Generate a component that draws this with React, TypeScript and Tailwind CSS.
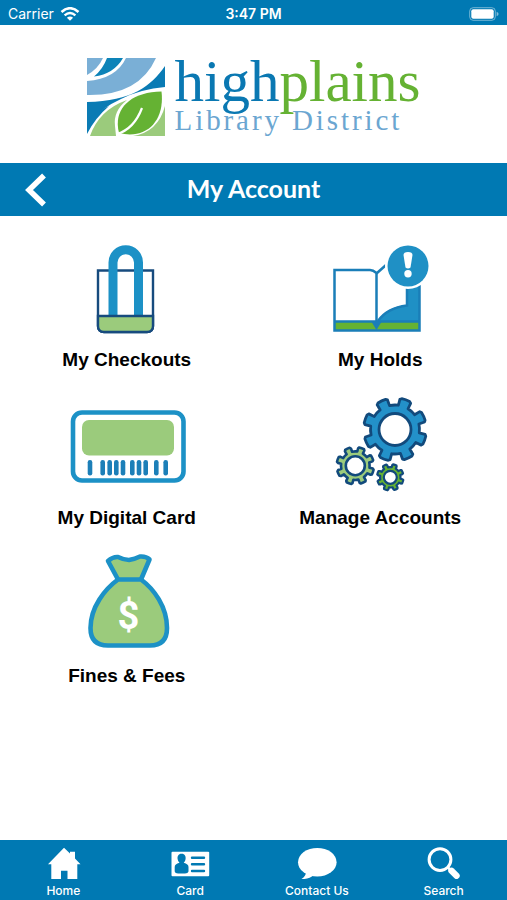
import type { ReactNode } from "react";

function gearPath(cx: number, cy: number, outer: number, inner: number, teeth: number, offset: number) {
  const step = 360 / teeth;
  const point = (r: number, deg: number) => {
    const a = (deg * Math.PI) / 180;
    return `${(cx + r * Math.cos(a)).toFixed(2)} ${(cy + r * Math.sin(a)).toFixed(2)}`;
  };
  const parts: string[] = [];
  for (let i = 0; i < teeth; i++) {
    const a = offset + i * step;
    parts.push(
      `${i === 0 ? "M" : "L"}${point(inner, a - step * 0.27)}`,
      `L${point(outer - 1, a - step * 0.24)}`,
      `L${point(outer, a - step * 0.17)}`,
      `A${outer} ${outer} 0 0 1 ${point(outer, a + step * 0.17)}`,
      `L${point(outer - 1, a + step * 0.24)}`,
      `L${point(inner, a + step * 0.27)}`,
      `A${inner} ${inner} 0 0 1 ${point(inner, a + step * 0.73)}`
    );
  }
  return parts.join(" ") + "Z";
}

function Gear(props: { cx: number; cy: number; outer: number; inner: number; hole: number; fill: string; stroke: number }) {
  const { cx, cy, outer, inner, hole, fill, stroke } = props;
  return (
    <g stroke="#124a7c" strokeWidth={stroke} strokeLinejoin="round">
      <path d={gearPath(cx, cy, outer, inner, 8, -70)} fill={fill} />
      <circle cx={cx} cy={cy} r={hole} fill="#fff" />
    </g>
  );
}

function Emblem() {
  return (
    <svg viewBox="0 0 78 78" className="size-[78px] shrink-0" aria-hidden="true">
      <path d="M0 0H16Q11 11 0 17Z" fill="#7aafd6" />
      <path d="M20 0H36Q27 16 7 18.500Q16 11 20 0Z" fill="#0d83b8" />
      <path d="M39 0H69Q52 38 0 37V23Q29 21 39 0Z" fill="#7aafd6" />
      <path d="M78 8V29Q54 31 34 41Q14 50 0 66V44C45 43 64 28 78 8Z" fill="#0a7bb4" />
      <path d="M3 78Q12 52 40 42Q26 53 28 68L29 78Z" fill="#9bcb7c" />
      <path d="M0 62V76Q8 60 22 48Q8 54 0 62Z" fill="#0a7bb4" />
      <path d="M74.500 33.500C78 62 60 82 32 75C26 52 42 34 74.500 33.500Z" fill="#65b233" />
      <path d="M30 76Q47 71 55 50" fill="none" stroke="#fff" strokeWidth="2.200" />
      <path d="M78 48V78H46Q71 74 78 48Z" fill="#9bcb7c" />
    </svg>
  );
}

function BagIcon() {
  return (
    <svg viewBox="0 0 120 100" className="h-[100px] w-[120px]" aria-hidden="true">
      <path d="M31 35.5H86V91Q86 97 80 97H37Q31 97 31 91Z" fill="#fff" stroke="#174b7e" strokeWidth="2.400" />
      <path d="M46 81V27.5a12.75 12.75 0 0 1 25.5 0V81" fill="none" stroke="#1c91c6" strokeWidth="9" />
      <path d="M31 81H86V91Q86 97 80 97H37Q31 97 31 91Z" fill="#9bcb7c" stroke="#174b7e" strokeWidth="2.400" />
    </svg>
  );
}

function BookIcon() {
  return (
    <svg viewBox="0 0 120 100" className="h-[100px] w-[120px]" aria-hidden="true">
      <path d="M14 87H99V95.500H14Z" fill="#65b233" />
      <path d="M86.500 50H100V86H58Q66 72 86.500 70Z" fill="#1f90c5" />
      <g fill="none" stroke="#1a7eb8" strokeWidth="2.500">
        <path d="M56.500 88V38Q53 35 50 35H14.500V95.500H99.500V50" />
        <path d="M14 86.500H99" />
        <path d="M56.500 38.500L66 30" />
        <path d="M58 86Q67 73 87 70.500V50" />
      </g>
      <path d="M51 86H62L56.500 95Z" fill="#1a7eb8" />
      <circle cx="88" cy="31" r="23" fill="#fff" />
      <circle cx="88" cy="31" r="20.500" fill="#1f90c5" />
      <path d="M83.500 20Q83.500 17 88 17T92.500 20L90.500 32.500Q88 34.500 85.500 32.500Z" fill="#fff" />
      <circle cx="88" cy="38.800" r="3.700" fill="#fff" />
    </svg>
  );
}

const bars = [23, 35.7, 42.7, 49.3, 56, 65.3, 72, 78.7, 89.3, 98.7];

function CardIcon() {
  return (
    <svg viewBox="0 0 120 100" className="h-[100px] w-[120px]" aria-hidden="true">
      <rect x="6" y="19.500" width="110.500" height="68" rx="9" fill="#fff" stroke="#1c91c6" strokeWidth="4.600" />
      <rect x="15" y="27" width="92" height="35.500" rx="7" fill="#9bcb7c" />
      {bars.map((x) => (
        <rect key={x} x={x - 2.3} y="67" width="4.600" height="15.500" rx="2.200" fill="#1c7fb8" />
      ))}
    </svg>
  );
}

function GearsIcon() {
  return (
    <svg viewBox="0 0 120 100" className="h-[100px] w-[120px]" aria-hidden="true">
      <Gear cx={75} cy={36.5} outer={31.5} inner={24.5} hole={16} fill="#2391c9" stroke={2.8} />
      <Gear cx={35.3} cy={72.7} outer={18.7} inner={14.3} hole={9.5} fill="#9bcb7c" stroke={2.6} />
      <Gear cx={70.3} cy={84.3} outer={13.3} inner={10.2} hole={6.5} fill="#65b233" stroke={2.2} />
    </svg>
  );
}

function MoneyIcon() {
  return (
    <svg viewBox="0 0 120 100" className="h-[100px] w-[120px]" aria-hidden="true">
      <g fill="#9bcb7c" stroke="#1c91c6" strokeWidth="4.600" strokeLinejoin="round">
        <path d="M51 28.500L41 10Q46 5.500 51 6Q57 9 62 9Q68 8 73 5.500Q79 5 82.500 8.500L74 28.500" />
        <path d="M51 28.500H74C87 38 100 56 100 77Q100 94.500 83 94.500H41Q23.500 94.500 23.500 77C23.500 56 38 38 51 28.500Z" />
      </g>
      <text x="61.500" y="78" textAnchor="middle" fontSize="38" className="fill-white font-['Roboto'] font-bold">
        $
      </text>
    </svg>
  );
}

function HomeIcon() {
  return (
    <svg viewBox="0 0 40 32" className="h-8 w-10" fill="#fff" aria-hidden="true">
      <path d="M21 .7L27 6.600V4.700H32V11.500L37.500 17.300H34.300V32H24.500V23.700H18V32H8.300V17.300H5Z" />
    </svg>
  );
}

function IdIcon() {
  return (
    <svg viewBox="0 0 40 32" className="h-8 w-10" aria-hidden="true">
      <rect x="1.500" y="4.700" width="37.700" height="24.500" rx="1" fill="#fff" />
      <path d="M11.600 6.800C15 6.800 16 9.500 15.600 12Q15.300 14.500 13.700 15.800Q18.500 17 18.500 20V24.500Q18 26.500 15 26.500H8Q5 26.500 4.700 24.500V20Q4.700 17 9.500 15.800Q7.900 14.500 7.600 12C7.200 9.500 8.200 6.800 11.600 6.800Z" fill="#0079b3" />
      <path d="M22 10.700H34M22 17.300H34M22 24H34" stroke="#0079b3" strokeWidth="2.400" strokeLinecap="round" />
    </svg>
  );
}

function ChatIcon() {
  return (
    <svg viewBox="0 0 40 32" className="h-8 w-10" fill="#fff" aria-hidden="true">
      <ellipse cx="20.300" cy="15.200" rx="19.300" ry="14.300" />
      <path d="M9 25Q9 29 4.500 32Q12 32.500 17 28Z" />
    </svg>
  );
}

function SearchIcon() {
  return (
    <svg viewBox="0 0 40 32" className="h-8 w-10" fill="none" stroke="#fff" aria-hidden="true">
      <circle cx="16" cy="12.600" r="10.900" strokeWidth="3" />
      <path d="M23.500 20L26 22.500" strokeWidth="2.500" />
      <path d="M27.500 23.800L32.500 28.800" strokeWidth="6.400" strokeLinecap="round" />
    </svg>
  );
}

function Tile({ label, icon }: { label: string; icon: ReactNode }) {
  return (
    <button type="button" className="flex flex-col items-center gap-[13px]">
      {icon}
      <span className="text-[19px] leading-6 font-bold text-black">{label}</span>
    </button>
  );
}

function Tab({ label, icon }: { label: string; icon: ReactNode }) {
  return (
    <a href="#" className="flex flex-1 flex-col items-center gap-1 pt-[7px] pb-px">
      {icon}
      <span className="font-['Inter',sans-serif] text-[12px] leading-4 font-medium text-white">{label}</span>
    </a>
  );
}

export default function App() {
  return (
    <div className="flex min-h-screen flex-col bg-white font-['Liberation_Sans',Arial,sans-serif]">
      <div className="grid h-[25px] grid-cols-3 items-center bg-[#0079b3] px-2 pt-0.5 font-['Inter',sans-serif] text-[14px] leading-4 text-white">
        <div className="flex items-center gap-1.5">
          <span>Carrier</span>
          <svg viewBox="0 0 20 14" className="h-3.5 w-5" fill="none" stroke="#fff" aria-label="Wi-Fi">
            <path d="M1.500 5Q10-2.500 18.500 5" strokeWidth="2.600" />
            <path d="M4.600 8.300Q10 3.600 15.400 8.300" strokeWidth="2.400" />
            <path d="M10 13.800L6.900 10.700Q10 8.200 13.100 10.700Z" fill="#fff" stroke="none" />
          </svg>
        </div>
        <span className="text-center font-semibold">3:47 PM</span>
        <svg viewBox="0 0 30 14" className="h-3.5 w-[30px] justify-self-end" aria-label="Battery full">
          <rect x=".7" y=".7" width="25.600" height="12.600" rx="3.500" fill="none" stroke="#fff" strokeOpacity=".45" />
          <rect x="2.300" y="2.300" width="22.400" height="9.400" rx="2" fill="#fff" />
          <path d="M27.600 4.700Q29.600 5.500 29.600 7T27.600 9.300Z" fill="#fff" fillOpacity=".5" />
        </svg>
      </div>

      <header className="flex justify-center gap-2.5 pt-[33px] pb-[27px]">
        <Emblem />
        <div className="font-['Liberation_Serif','Times_New_Roman',serif]">
          <div className="text-[59px] leading-[46px] text-[#0a78b2]">
            high<span className="text-[#65b233]">plains</span>
          </div>
          <div className="text-[29px] leading-8 tracking-widest text-[#6ba6d1]">Library District</div>
        </div>
      </header>

      <div className="grid h-[53px] grid-cols-[1fr_auto_1fr] items-center bg-[#0079b3] px-6">
        <button type="button" aria-label="Back" className="justify-self-start">
          <svg viewBox="0 0 24 34" className="h-[34px] w-6" fill="none" stroke="#fff" strokeWidth="5.500">
            <path d="M20 2.500L5 17L20 31.500" />
          </svg>
        </button>
        <h1 className="pb-1 font-['Lato',sans-serif] text-[25px] leading-8 font-bold text-white">My Account</h1>
      </div>

      <main className="grid flex-1 grid-cols-2 content-start gap-y-[21px] pt-[19px]">
        <Tile label="My Checkouts" icon={<BagIcon />} />
        <Tile label="My Holds" icon={<BookIcon />} />
        <Tile label="My Digital Card" icon={<CardIcon />} />
        <Tile label="Manage Accounts" icon={<GearsIcon />} />
        <Tile label="Fines & Fees" icon={<MoneyIcon />} />
      </main>

      <nav className="flex bg-[#0079b3]">
        <Tab label="Home" icon={<HomeIcon />} />
        <Tab label="Card" icon={<IdIcon />} />
        <Tab label="Contact Us" icon={<ChatIcon />} />
        <Tab label="Search" icon={<SearchIcon />} />
      </nav>
    </div>
  );
}
